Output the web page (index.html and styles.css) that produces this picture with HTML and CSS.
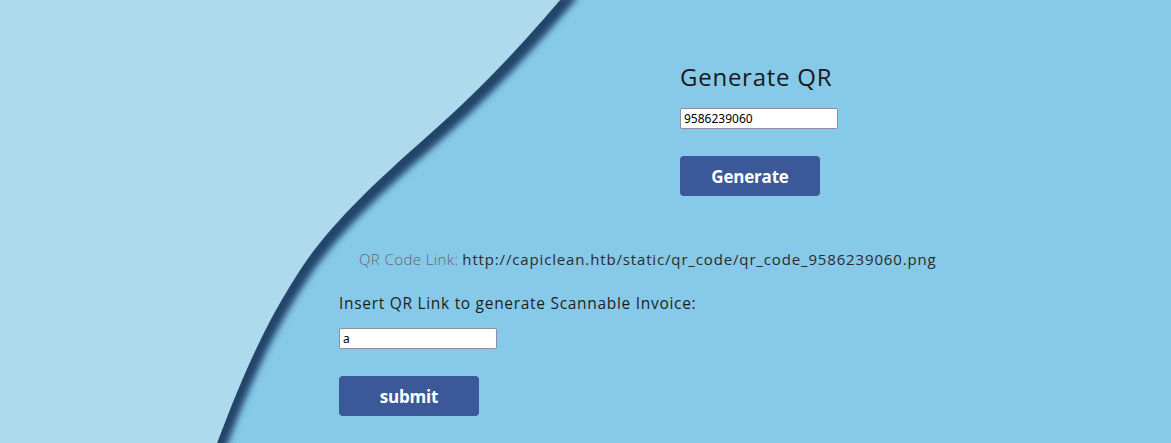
FILE: index.html
```html
<!DOCTYPE html>
<html lang="en">
<head>
<meta charset="utf-8">
<title>Generate QR</title>
<link rel="stylesheet" href="styles.css">
</head>
<body>
<svg class="backdrop" width="1171" height="443" viewBox="0 0 1171 443" aria-hidden="true">
  <defs>
    <filter id="shade" x="-10%" y="-10%" width="130%" height="130%">
      <feDropShadow dx="7" dy="10" stdDeviation="3.2" flood-color="#24456a" flood-opacity="1"/>
    </filter>
  </defs>
  <path filter="url(#shade)" fill="#addaec" d="M572,-14 L560,0 C520,47 477,93 423,140 C374,183 328,227 300,270 C262,328 239,385 217,443 L210,470 L-20,470 L-20,-20 Z"/>
</svg>
<main class="page">
  <section class="qr-form">
    <h1 class="title">Generate QR</h1>
    <input class="field" type="text" value="9586239060">
    <button class="btn">Generate</button>
  </section>
  <p class="qr-link"><span class="qr-label">QR Code Link:</span> <span class="qr-url">http://capiclean.htb/static/qr_code/qr_code_9586239060.png</span></p>
  <section class="invoice-form">
    <label class="invoice-label">Insert QR Link to generate Scannable Invoice:</label>
    <input class="field" type="text" value="a">
    <button class="btn">submit</button>
  </section>
</main>
</body>
</html>
```
FILE: styles.css
```css
html, body {
  margin: 0;
  padding: 0;
}
body {
  background: #87c9e9;
  width: 1171px;
  height: 443px;
  overflow: hidden;
  position: relative;
  font-family: "Open Sans", "Noto Sans", sans-serif;
}
.backdrop {
  position: absolute;
  left: 0;
  top: 0;
  z-index: 0;
}
.page {
  position: relative;
  z-index: 1;
  padding: 62px 0 0 339px;
  display: flex;
  flex-direction: column;
}
.qr-form {
  margin-left: 341px;
  display: flex;
  flex-direction: column;
  align-items: flex-start;
}
.title {
  margin: 0;
  font-family: "Open Sans", sans-serif;
  font-weight: 400;
  font-size: 24px;
  line-height: 30px;
  color: #1a1a1a;
  letter-spacing: 0.75px;
}
.field {
  box-sizing: border-box;
  width: 158px;
  height: 21px;
  margin: 0;
  padding: 1px 3px;
  border: 1px solid #8f8f9d;
  border-radius: 2px;
  background: #fff;
  font-family: "Noto Sans", sans-serif;
  font-size: 12px;
  color: #000;
}
.qr-form .field {
  margin-top: 16px;
}
.btn {
  box-sizing: border-box;
  width: 140px;
  height: 40px;
  margin-top: 27px;
  border: none;
  border-radius: 4px;
  background: #3b5998;
  color: #fff;
  font-family: "Open Sans", sans-serif;
  font-weight: 700;
  font-size: 17px;
  letter-spacing: -0.2px;
  padding: 0;
}
.qr-link {
  margin: 52px 0 0 20px;
  font-size: 15px;
  line-height: 22px;
  color: #2b2b2b;
}
.qr-label {
  color: #666;
  font-weight: 300;
  letter-spacing: 0.4px;
}
.qr-url {
  letter-spacing: 0.85px;
}
.invoice-form {
  display: flex;
  flex-direction: column;
  align-items: flex-start;
  margin-top: 22px;
}
.invoice-label {
  font-size: 15.5px;
  line-height: 22px;
  letter-spacing: 0.7px;
  color: #1e1e1e;
}
.invoice-form .field {
  margin-top: 14px;
}
```
